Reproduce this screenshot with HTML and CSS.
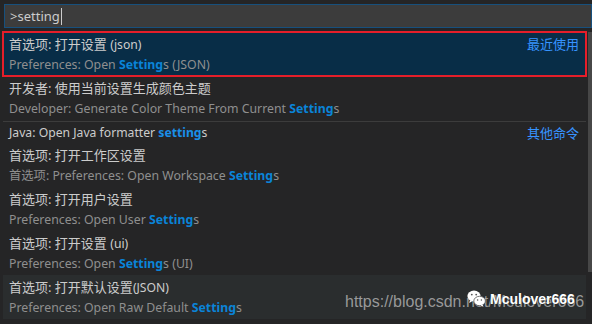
FILE: index.html
```html
<!DOCTYPE html>
<html>
<head>
<meta charset="utf-8">
<link rel="stylesheet" href="styles.css">
</head>
<body>
<div class="widget">
  <div class="input"><span class="query">&gt;setting</span><span class="caret"></span></div>
  <div class="body">
    <div class="list">
      <div class="item selected">
        <div class="line"><span class="label">首选项: 打开设置 <span class="en">(json)</span></span><span class="tag">最近使用</span></div>
        <div class="detail">Preferences: Open <b>Setting</b>s (JSON)</div>
      </div>
      <div class="item">
        <div class="line"><span class="label">开发者: 使用当前设置生成颜色主题</span></div>
        <div class="detail">Developer: Generate Color Theme From Current <b>Setting</b>s</div>
      </div>
      <div class="item sep">
        <div class="line"><span class="label en">Java: Open Java formatter <b>setting</b>s</span><span class="tag">其他命令</span></div>
      </div>
      <div class="item">
        <div class="line"><span class="label">首选项: 打开工作区设置</span></div>
        <div class="detail">首选项: Preferences: Open Workspace <b>Setting</b>s</div>
      </div>
      <div class="item">
        <div class="line"><span class="label">首选项: 打开用户设置</span></div>
        <div class="detail">Preferences: Open User <b>Setting</b>s</div>
      </div>
      <div class="item">
        <div class="line"><span class="label">首选项: 打开设置 <span class="en">(ui)</span></span></div>
        <div class="detail">Preferences: Open <b>Setting</b>s (UI)</div>
      </div>
      <div class="item hover">
        <div class="line"><span class="label">首选项: 打开默认设置<span class="en">(JSON)</span></span></div>
        <div class="detail">Preferences: Open Raw Default <b>Setting</b>s</div>
      </div>
    </div>
    <div class="scrollbar"></div>
  </div>
</div>
<div class="watermark">https://blog.csdn.net/Mculover666</div>
<div class="wechat">
  <svg width="19" height="17" viewBox="0 0 19 17">
    <ellipse cx="7" cy="6" rx="6.6" ry="5.4" fill="#fff"/>
    <path d="M3 10 L2.2 13 L5.5 11 Z" fill="#fff"/>
    <circle cx="4.8" cy="4.6" r="0.9" fill="#555"/>
    <circle cx="9.2" cy="4.6" r="0.9" fill="#555"/>
    <ellipse cx="12.6" cy="11" rx="5.8" ry="4.7" fill="#fff" stroke="#555" stroke-width="0.8"/>
    <path d="M15.5 14.6 L16.6 16.8 L13.6 15.4 Z" fill="#fff"/>
    <circle cx="10.6" cy="10" r="0.75" fill="#555"/>
    <circle cx="14.4" cy="10" r="0.75" fill="#555"/>
  </svg>
  <span>Mculover666</span>
</div>
</body>
</html>
```
FILE: styles.css
```css
html, body {
  margin: 0;
  padding: 0;
  background: #252526;
  overflow: hidden;
}
body {
  width: 592px;
  height: 324px;
  position: relative;
  font-family: "Noto Sans", "Noto Sans CJK SC", sans-serif;
}
.widget {
  display: flex;
  flex-direction: column;
  padding: 4px 0 0 4px;
}
.input {
  height: 22px;
  background: #3c3c3c;
  border: 1px solid #17507d;
  display: flex;
  align-items: center;
  padding-left: 5px;
  color: #cccccc;
  font-size: 13px;
}
.caret {
  width: 1px;
  height: 17px;
  background: #cccccc;
  margin-left: 1px;
}
.body {
  display: flex;
  margin-top: 4px;
  margin-left: -1px;
  gap: 2px;
}
.list {
  flex: 1;
  display: flex;
  flex-direction: column;
}
.scrollbar {
  width: 4px;
  height: 240px;
  background: #474747;
}
.item {
  padding: 0 7px 0 6px;
}
.item.selected {
  background: #082d47;
  outline: 2px solid #e51e2a;
  outline-offset: -1px;
}
.item.hover {
  background: #2a2d2e;
}
.item.sep {
  border-top: 1px solid #3c3c3c;
  margin-top: 1px;
}
.item.sep .line {
  height: 21px;
}
.line {
  height: 22px;
  display: flex;
  align-items: center;
  justify-content: space-between;
}
.label {
  color: #cccccc;
  font-size: 13px;
  white-space: nowrap;
}
.en {
  font-size: 12.2px;
}
.tag {
  color: #3794ff;
  font-size: 13px;
}
.detail {
  height: 22px;
  line-height: 22px;
  color: #8f8f8f;
  font-size: 12.3px;
  white-space: nowrap;
}
b {
  color: #0a84d8;
  font-weight: bold;
}
.label b {
  color: #1a8fe8;
}
.watermark {
  position: absolute;
  left: 345px;
  top: 293px;
  font-family: "Liberation Sans", Arial, sans-serif;
  font-size: 16px;
  color: rgba(190, 190, 190, 0.75);
  white-space: nowrap;
}
.wechat {
  position: absolute;
  left: 467px;
  top: 290px;
  display: flex;
  align-items: center;
  gap: 4px;
  color: #ffffff;
  font-family: "Liberation Sans", Arial, sans-serif;
  font-weight: bold;
  font-size: 14px;
  text-shadow: 0 0 1px #222;
}
```
